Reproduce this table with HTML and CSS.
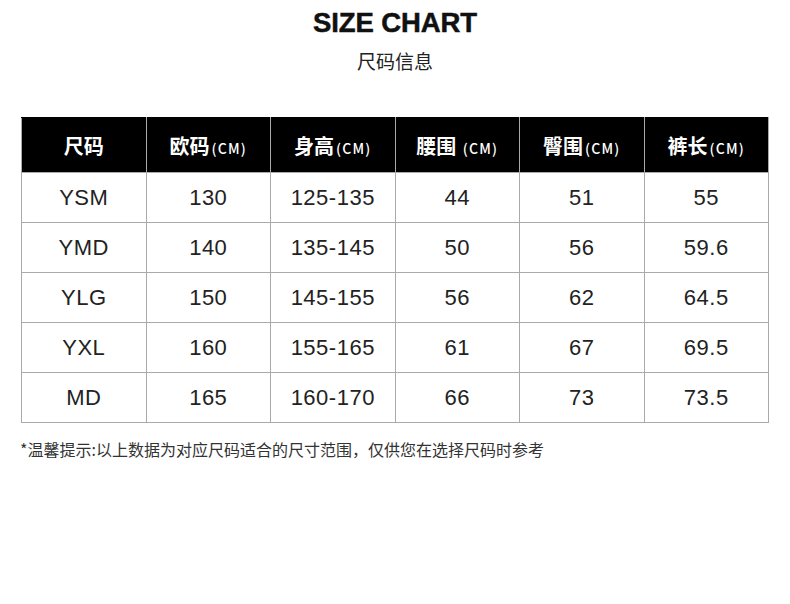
FILE: index.html
```html
<!DOCTYPE html>
<html lang="zh-CN">
<head>
<meta charset="utf-8">
<title>Size Chart</title>
<link rel="stylesheet" href="styles.css">
</head>
<body>
<div class="page">
  <header class="head">
    <h1 class="title">SIZE CHART</h1>
    <p class="subtitle">尺码信息</p>
  </header>
  <table class="chart">
    <thead>
      <tr>
        <th>尺码</th>
        <th>欧码<span class="unit">(CM)</span></th>
        <th>身高<span class="unit">(CM)</span></th>
        <th>腰围 <span class="unit">(CM)</span></th>
        <th>臀围<span class="unit">(CM)</span></th>
        <th>裤长<span class="unit">(CM)</span></th>
      </tr>
    </thead>
    <tbody>
      <tr><td>YSM</td><td>130</td><td>125-135</td><td>44</td><td>51</td><td>55</td></tr>
      <tr><td>YMD</td><td>140</td><td>135-145</td><td>50</td><td>56</td><td>59.6</td></tr>
      <tr><td>YLG</td><td>150</td><td>145-155</td><td>56</td><td>62</td><td>64.5</td></tr>
      <tr><td>YXL</td><td>160</td><td>155-165</td><td>61</td><td>67</td><td>69.5</td></tr>
      <tr><td>MD</td><td>165</td><td>160-170</td><td>66</td><td>73</td><td>73.5</td></tr>
    </tbody>
  </table>
  <p class="note">*温馨提示:以上数据为对应尺码适合的尺寸范围，仅供您在选择尺码时参考</p>
</div>
</body>
</html>
```

FILE: styles.css
```css
html, body {
  margin: 0;
  padding: 0;
  background: #fff;
}

.page {
  width: 790px;
  padding-top: 8px;
}

.head {
  display: flex;
  flex-direction: column;
  align-items: center;
}

.title {
  margin: 0;
  font-family: "Liberation Sans", Arial, sans-serif;
  font-weight: 700;
  font-size: 27.5px;
  line-height: 30px;
  letter-spacing: -0.1px;
  -webkit-text-stroke: 0.5px #111;
  color: #111;
}

.subtitle {
  margin: 13px 0 0;
  font-family: "Noto Sans CJK SC", sans-serif;
  font-size: 19px;
  line-height: 19px;
  color: #222;
}

.chart {
  margin: 47px 0 0 21px;
  width: 748px;
  border-collapse: collapse;
  table-layout: fixed;
}

.chart th,
.chart td {
  border: 1px solid #aaaaaa;
  text-align: center;
  padding: 0;
}

.chart thead tr {
  height: 55px;
}

.chart th {
  background: #000;
  border-top-color: #000;
  color: #fff;
  font-family: "Noto Sans CJK SC", sans-serif;
  font-weight: 700;
  font-size: 20px;
  white-space: nowrap;
}

.chart .unit {
  margin-left: 2px;
  font-size: 14px;
  font-weight: 500;
  letter-spacing: 1.2px;
}

.chart tbody tr {
  height: 50px;
}

.chart td {
  font-family: "Liberation Sans", Arial, sans-serif;
  font-size: 22px;
  color: #222;
  letter-spacing: 0.5px;
}

.note {
  margin: 16px 0 0 20px;
  font-family: "Noto Sans CJK SC", sans-serif;
  font-size: 16px;
  line-height: 20px;
  color: #333;
}
```
